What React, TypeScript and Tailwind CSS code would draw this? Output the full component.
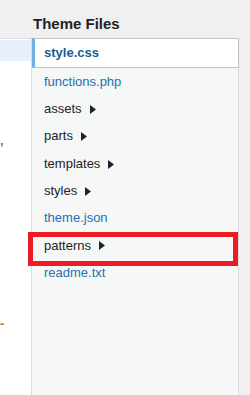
import React from 'react';

interface FileItem {
  name: string;
  dir?: boolean;
  active?: boolean;
}

const FILES: FileItem[] = [
  { name: 'style.css', active: true },
  { name: 'functions.php' },
  { name: 'assets', dir: true },
  { name: 'parts', dir: true },
  { name: 'templates', dir: true },
  { name: 'styles', dir: true },
  { name: 'theme.json' },
  { name: 'patterns', dir: true },
  { name: 'readme.txt' },
];

function Arrow() {
  return (
    <svg width="6" height="9" viewBox="0 0 6 9" className="ml-[8px] mt-[1px]">
      <path d="M0 0 L6 4.5 L0 9 Z" fill="#1d2327" />
    </svg>
  );
}

export default function App() {
  return (
    <div
      className="relative w-[250px] h-[395px] bg-[#f0f0f1] flex overflow-hidden"
      style={{ fontFamily: '"Liberation Sans", Arial, sans-serif' }}
    >
      {/* Editor edge */}
      <div className="w-[31px] shrink-0 flex flex-col">
        <div className="h-[38px] shrink-0" />
        <div className="flex-1 bg-white border-t border-[#dcdcde] relative">
          <div className="mt-[1px] h-[21px] bg-[#e6f1fc]" />
          <span className="absolute left-[0px] top-[95px] text-[13px] font-bold leading-none text-[#b86a2a]">,</span>
          <span className="absolute left-[0px] top-[278px] text-[13px] font-bold leading-none text-[#b86a2a]">-</span>
        </div>
      </div>

      {/* Sidebar */}
      <div className="w-[208px] shrink-0 flex flex-col">
        <h2 className="h-[38px] shrink-0 pl-[2px] pt-[15px] text-[15px] leading-[18px] font-bold text-[#1d2327]">
          Theme Files
        </h2>
        <ul className="flex-1 bg-[#f6f7f7] border-l border-r border-[#dcdcde] pt-[1px]">
          {FILES.map(f => (
            <li
              key={f.name}
              className={
                f.active
                  ? 'h-[30px] -mt-[1px] -mr-[1px] flex items-center pl-[9px] bg-white border border-[#c3c4c7] border-l-[3px] border-l-[#72aee6] text-[13px] font-semibold text-[#135e96]'
                  : f.dir
                  ? 'h-[27.3px] flex items-center pl-[12px] text-[13px] text-[#1d2327]'
                  : 'h-[27.3px] flex items-center pl-[12px] text-[13px] text-[#2271b1]'
              }
            >
              {f.name}
              {f.dir && <Arrow />}
            </li>
          ))}
        </ul>
      </div>

      {/* Highlight annotation */}
      <div className="absolute left-[28px] top-[232px] w-[210px] h-[34px] border-[5px] border-[#ed1c24]" />
    </div>
  );
}
